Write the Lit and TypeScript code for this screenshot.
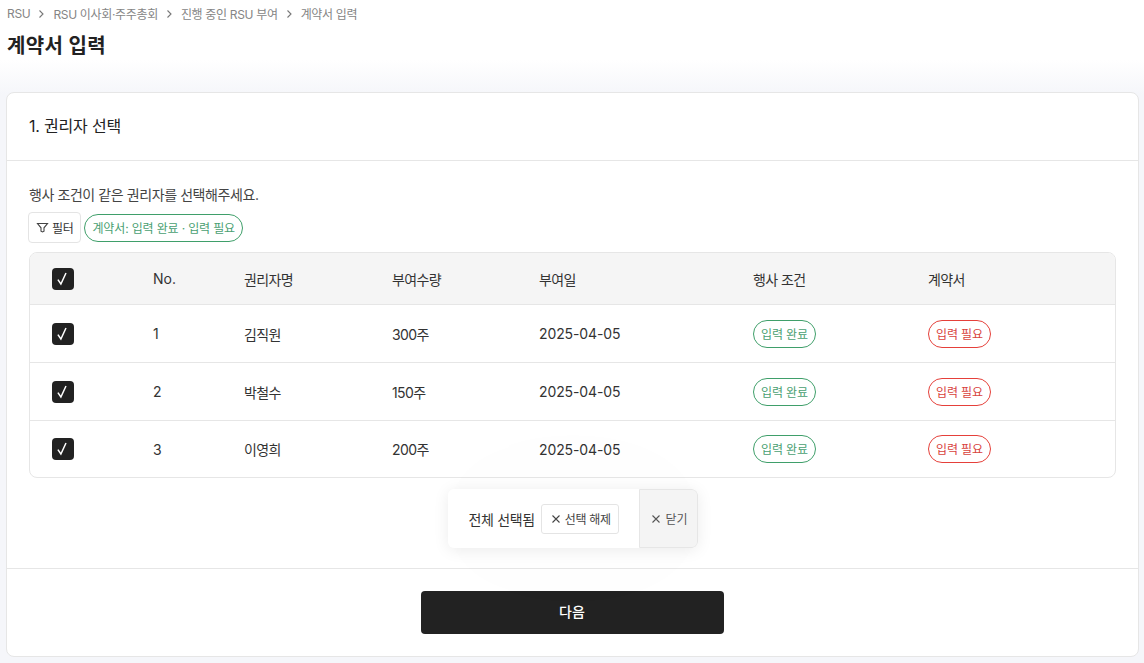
import { LitElement, html, css, svg } from 'lit';
import { customElement } from 'lit/decorators.js';

const rows = [
  { no: 1, name: '김직원', qty: '300주', date: '2025-04-05' },
  { no: 2, name: '박철수', qty: '150주', date: '2025-04-05' },
  { no: 3, name: '이영희', qty: '200주', date: '2025-04-05' },
];

const crumbs = ['RSU', 'RSU 이사회·주주총회', '진행 중인 RSU 부여', '계약서 입력'];

const chevron = svg`<path d="M2.5 1.5 6 5 2.5 8.5" fill="none" stroke="currentColor" stroke-width="1.1" />`;
const cross = svg`<path d="M1.5 1.5l7 7M8.5 1.5l-7 7" fill="none" stroke="currentColor" stroke-width="1.1" />`;

@customElement('app-root')
export class AppRoot extends LitElement {
  static styles = css`
    :host {
      display: block;
      height: 663px;
      overflow: hidden;
      box-sizing: border-box;
      font-family: Inter, 'Noto Sans CJK KR', sans-serif;
      color: #222;
      background: linear-gradient(#fff 0, #fff 60px, #f5f6fa 95px);
    }
    .header {
      padding: 5px 7px 0;
      height: 92px;
      box-sizing: border-box;
    }
    .crumbs {
      display: flex;
      align-items: center;
      height: 17px;
      font-size: 12px;
      letter-spacing: -0.33px;
      color: #858585;
    }
    .crumbs svg {
      width: 10px;
      height: 10px;
      margin: 0 6px 0 7px;
      color: #777;
    }
    h1 {
      margin: 10px 0 0;
      font-size: 20px;
      line-height: 28px;
      font-weight: 700;
      letter-spacing: 0.4px;
      color: #222;
    }
    .card {
      margin: 0 5px 0 6px;
      height: 565px;
      box-sizing: border-box;
      background: #fff;
      border: 1px solid #e6e6e6;
      border-radius: 8px;
      display: flex;
      flex-direction: column;
    }
    .card-head {
      height: 68px;
      box-sizing: border-box;
      border-bottom: 1px solid #e6e6e6;
      padding: 0 22px 4px;
      display: flex;
      align-items: center;
      font-size: 16px;
      letter-spacing: -0.2px;
      color: #222;
    }
    .card-body {
      flex: 1;
      padding: 24px 22px 0;
      display: flex;
      flex-direction: column;
      align-items: stretch;
    }
    .hint {
      font-size: 14px;
      line-height: 20px;
      color: #444;
      letter-spacing: -0.42px;
    }
    .filters {
      display: flex;
      align-items: center;
      gap: 3px;
      margin-top: 7px;
      margin-left: -1px;
    }
    .filter-btn {
      display: flex;
      align-items: center;
      gap: 3px;
      height: 31px;
      box-sizing: border-box;
      padding: 0 7px;
      background: #fff;
      border: 1px solid #e4e4e4;
      border-radius: 4px;
      font-size: 12px;
      letter-spacing: -0.3px;
      color: #333;
    }
    .filter-btn svg {
      width: 13px;
      height: 13px;
    }
    .chip {
      display: inline-flex;
      align-items: center;
      box-sizing: border-box;
      border-radius: 999px;
      border: 1px solid #3f9f6a;
      color: #4a9f72;
      font-size: 12px;
      height: 28px;
      padding: 0 7px 1px;
      letter-spacing: -0.15px;
      white-space: nowrap;
    }
    .chip.red {
      border-color: #e5403a;
      color: #d8433d;
    }
    .table {
      margin-top: 9px;
      border: 1px solid #e6e6e6;
      border-radius: 8px;
      overflow: hidden;
    }
    .row {
      display: grid;
      grid-template-columns: 123px 91px 148px 147px 214px 175px 1fr;
      align-items: center;
      height: 58px;
      box-sizing: border-box;
      border-top: 1px solid #e6e6e6;
      font-size: 14px;
      color: #333;
    }
    .row.head {
      height: 51px;
      border-top: 0;
      background: #f5f5f5;
    }
    .row:last-child {
      height: 57px;
    }
    .ko {
      letter-spacing: -0.6px;
    }
    .num {
      letter-spacing: -0.1px;
    }
    .cell-check {
      padding-left: 22px;
      display: flex;
    }
    .check {
      width: 22px;
      height: 22px;
      border-radius: 4px;
      background: #222;
      display: flex;
      align-items: center;
      justify-content: center;
    }
    .check svg {
      width: 14px;
      height: 14px;
    }
    .bar-wrap {
      display: flex;
      justify-content: center;
      margin-top: 11px;
    }
    .bar {
      display: flex;
      height: 59px;
      box-sizing: border-box;
      width: 250px;
      background: #fff;
      border-radius: 6px;
      box-shadow:
        0 2px 16px rgba(0, 0, 0, 0.08),
        0 0 140px rgba(0, 0, 0, 0.025);
      overflow: hidden;
      position: relative;
    }
    .bar-main {
      flex: 1;
      display: flex;
      align-items: center;
      gap: 6px;
      padding-left: 21px;
      font-size: 14px;
      letter-spacing: -0.35px;
      color: #333;
    }
    .unselect {
      display: flex;
      align-items: center;
      gap: 4px;
      width: 78px;
      height: 30px;
      box-sizing: border-box;
      padding: 0 0 0 9px;
      border: 1px solid #e4e4e4;
      border-radius: 3px;
      font-size: 12px;
      letter-spacing: -0.3px;
      color: #444;
    }
    .unselect svg,
    .close svg {
      width: 10px;
      height: 10px;
      flex: none;
    }
    .close {
      width: 59px;
      box-sizing: border-box;
      background: #f4f4f4;
      border: 1px solid #e6e6e6;
      border-radius: 0 6px 6px 0;
      display: flex;
      align-items: center;
      justify-content: center;
      gap: 4px;
      padding-left: 3px;
      font-size: 12px;
      color: #555;
    }
    .card-foot {
      height: 88px;
      box-sizing: border-box;
      border-top: 1px solid #e6e6e6;
      padding-top: 22px;
      display: flex;
      justify-content: center;
    }
    .next {
      width: 303px;
      height: 43px;
      box-sizing: border-box;
      padding-bottom: 3px;
      background: #222;
      color: #fff;
      border-radius: 4px;
      display: flex;
      align-items: center;
      justify-content: center;
      font-size: 14px;
      font-weight: 500;
      margin-left: -1px;
    }
  `;

  private renderCheck() {
    return html`<div class="cell-check">
      <span class="check">
        <svg viewBox="0 0 14 14"><path d="M1.9 7.6 4.9 12 10 1" fill="none" stroke="#fff" stroke-width="1.5" /></svg>
      </span>
    </div>`;
  }

  render() {
    return html`
      <div class="header">
        <div class="crumbs">
          ${crumbs.map(
            (c, i) => html`${i > 0 ? html`<svg viewBox="0 0 10 10">${chevron}</svg>` : ''}<span>${c}</span>`
          )}
        </div>
        <h1>계약서 입력</h1>
      </div>
      <div class="card">
        <div class="card-head">1. 권리자 선택</div>
        <div class="card-body">
          <div class="hint">행사 조건이 같은 권리자를 선택해주세요.</div>
          <div class="filters">
            <div class="filter-btn">
              <svg viewBox="0 0 13 13"><path d="M1.5 2.5h10L8 6.8v3.4L6.5 11 5 10.2V6.8z" fill="none" stroke="#444" stroke-width="1.1" /></svg>
              필터
            </div>
            <span class="chip">계약서: 입력 완료 · 입력 필요</span>
          </div>
          <div class="table">
            <div class="row head">
              ${this.renderCheck()}
              <div>No.</div>
              <div class="ko">권리자명</div>
              <div class="ko">부여수량</div>
              <div class="ko">부여일</div>
              <div class="ko">행사 조건</div>
              <div class="ko">계약서</div>
            </div>
            ${rows.map(
              (r) => html`<div class="row">
                ${this.renderCheck()}
                <div>${r.no}</div>
                <div class="ko">${r.name}</div>
                <div class="ko">${r.qty}</div>
                <div class="num">${r.date}</div>
                <div><span class="chip">입력 완료</span></div>
                <div><span class="chip red">입력 필요</span></div>
              </div>`
            )}
          </div>
          <div class="bar-wrap">
            <div class="bar">
              <div class="bar-main">
                전체 선택됨
                <div class="unselect"><svg viewBox="0 0 10 10">${cross}</svg>선택 해제</div>
              </div>
              <div class="close"><svg viewBox="0 0 10 10">${cross}</svg>닫기</div>
            </div>
          </div>
        </div>
        <div class="card-foot">
          <div class="next">다음</div>
        </div>
      </div>
    `;
  }
}
